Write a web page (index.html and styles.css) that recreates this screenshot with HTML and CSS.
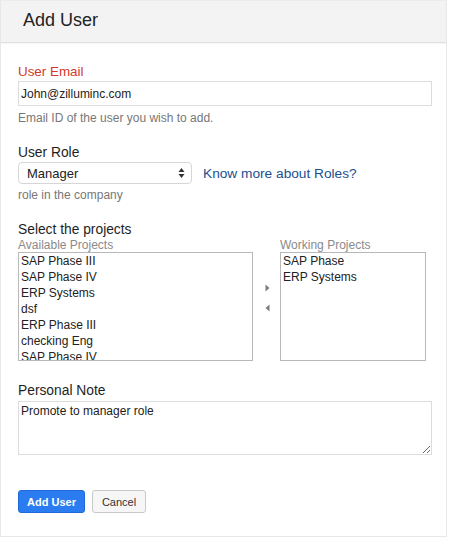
FILE: index.html
```html
<!DOCTYPE html>
<html>
<head>
<meta charset="utf-8">
<title>Add User</title>
<link rel="stylesheet" href="styles.css">
</head>
<body>
<div class="dialog">
  <div class="header">Add User</div>
  <div class="content">
    <div class="label required">User Email</div>
    <input class="text-input" type="text" value="John@zilluminc.com">
    <div class="help help-email">Email ID of the user you wish to add.</div>

    <div class="label label-role">User Role</div>
    <div class="role-row">
      <div class="select">
        <span>Manager</span>
        <svg class="select-arrows" width="7" height="12" viewBox="0 0 7 12"><path d="M3.5 1 L6.5 5 L0.5 5 Z" fill="#333"/><path d="M3.5 11 L6.5 7 L0.5 7 Z" fill="#333"/></svg>
      </div>
      <a class="link" href="#">Know more about Roles?</a>
    </div>
    <div class="help help-role">role in the company</div>

    <div class="label label-projects">Select the projects</div>
    <div class="projects">
      <div class="col col-left">
        <div class="sublabel">Available Projects</div>
        <ul class="listbox">
          <li>SAP Phase III</li>
          <li>SAP Phase IV</li>
          <li>ERP Systems</li>
          <li>dsf</li>
          <li>ERP Phase III</li>
          <li>checking Eng</li>
          <li>SAP Phase IV</li>
        </ul>
      </div>
      <div class="arrows">
        <svg width="5" height="8" viewBox="0 0 5 8"><path d="M0.5 0.5 L4.5 4 L0.5 7.5 Z" fill="#7d7d7d"/></svg>
        <svg width="5" height="8" viewBox="0 0 5 8"><path d="M4.5 0.5 L0.5 4 L4.5 7.5 Z" fill="#7d7d7d"/></svg>
      </div>
      <div class="col col-right">
        <div class="sublabel">Working Projects</div>
        <ul class="listbox">
          <li>SAP Phase</li>
          <li>ERP Systems</li>
        </ul>
      </div>
    </div>

    <div class="label label-note">Personal Note</div>
    <textarea class="note">Promote to manager role</textarea>

    <div class="buttons">
      <button class="btn btn-primary">Add User</button>
      <button class="btn btn-default">Cancel</button>
    </div>
  </div>
</div>
</body>
</html>
```

FILE: styles.css
```css
html, body {
  margin: 0;
  padding: 0;
  background: #ffffff;
}

body {
  font-family: "Liberation Sans", Arial, Helvetica, sans-serif;
  color: #222222;
}

.dialog {
  width: 447px;
  height: 537px;
  box-sizing: border-box;
  border: 1px solid #e8e8e8;
  border-top-color: #ececec;
  background: #ffffff;
}

.header {
  height: 41px;
  line-height: 38px;
  background: #f3f3f3;
  border-bottom: 1px solid #e0e0e0;
  box-shadow: 0 1px 1px rgba(0,0,0,0.03);
  padding-left: 22px;
  font-size: 18px;
  color: #222222;
}

.content {
  padding: 21px 14px 0 17px;
}

.label {
  font-size: 13.8px;
  line-height: 16px;
  color: #1e1e1e;
}

.label.required {
  color: #d3392c;
  font-size: 13.4px;
}

.text-input {
  display: block;
  box-sizing: border-box;
  width: 414px;
  height: 25px;
  margin: 1px 0 0 0;
  padding: 0 2px;
  border: 1px solid #dcdcdc;
  border-radius: 0;
  font-family: "Liberation Sans", Arial, sans-serif;
  font-size: 12px;
  color: #222222;
  outline: none;
}

.help {
  font-size: 12px;
  line-height: 14px;
  color: #777777;
}

.help-email {
  margin-top: 5px;
}

.label-role {
  margin-top: 20px;
}

.role-row {
  display: flex;
  align-items: center;
  margin-top: 1px;
}

.select {
  box-sizing: border-box;
  width: 174px;
  height: 22px;
  border: 1px solid #d6d6d6;
  border-radius: 4px;
  display: flex;
  align-items: center;
  justify-content: space-between;
  padding: 0 6px 0 8px;
  font-size: 13px;
  color: #222222;
  background: #ffffff;
}

.select-arrows {
  display: block;
}

.link {
  margin-left: 11px;
  font-size: 13.7px;
  color: #21508f;
  text-decoration: none;
}

.help-role {
  margin-top: 4px;
}

.label-projects {
  margin-top: 20px;
}

.projects {
  display: flex;
  align-items: flex-start;
}

.col-left {
  width: 235px;
}

.col-right {
  width: 146px;
}

.sublabel {
  font-size: 12px;
  line-height: 14px;
  color: #8a8a8a;
}

.listbox {
  list-style: none;
  margin: 0;
  padding: 0 2px;
  box-sizing: border-box;
  height: 109px;
  overflow: hidden;
  border: 1px solid #b8b8b8;
  font-size: 12px;
  line-height: 16px;
  color: #222222;
}

.listbox li {
  white-space: nowrap;
}

.arrows {
  width: 27px;
  display: flex;
  flex-direction: column;
  align-items: center;
  gap: 12px;
  padding-top: 46px;
  padding-left: 1px;
  box-sizing: border-box;
}

.arrows svg {
  display: block;
}

.label-note {
  margin-top: 22px;
}

.note {
  display: block;
  box-sizing: border-box;
  width: 414px;
  height: 54px;
  margin: 2px 0 0 0;
  padding: 2px 2px;
  border: 1px solid #dcdcdc;
  border-radius: 0;
  font-family: "Liberation Sans", Arial, sans-serif;
  font-size: 12px;
  line-height: 15px;
  color: #222222;
  outline: none;
  resize: vertical;
}

.buttons {
  display: flex;
  gap: 7px;
  margin-top: 35px;
}

.btn {
  box-sizing: border-box;
  height: 23px;
  border-radius: 3px;
  font-family: "Liberation Sans", Arial, sans-serif;
  font-size: 11px;
  padding: 0;
  cursor: pointer;
}

.btn-primary {
  width: 67px;
  background: #2b7cf0;
  border: 1px solid #2169d8;
  color: #ffffff;
  font-weight: bold;
}

.btn-default {
  width: 54px;
  background: #f6f6f6;
  border: 1px solid #c9c9c9;
  color: #333333;
}
```
